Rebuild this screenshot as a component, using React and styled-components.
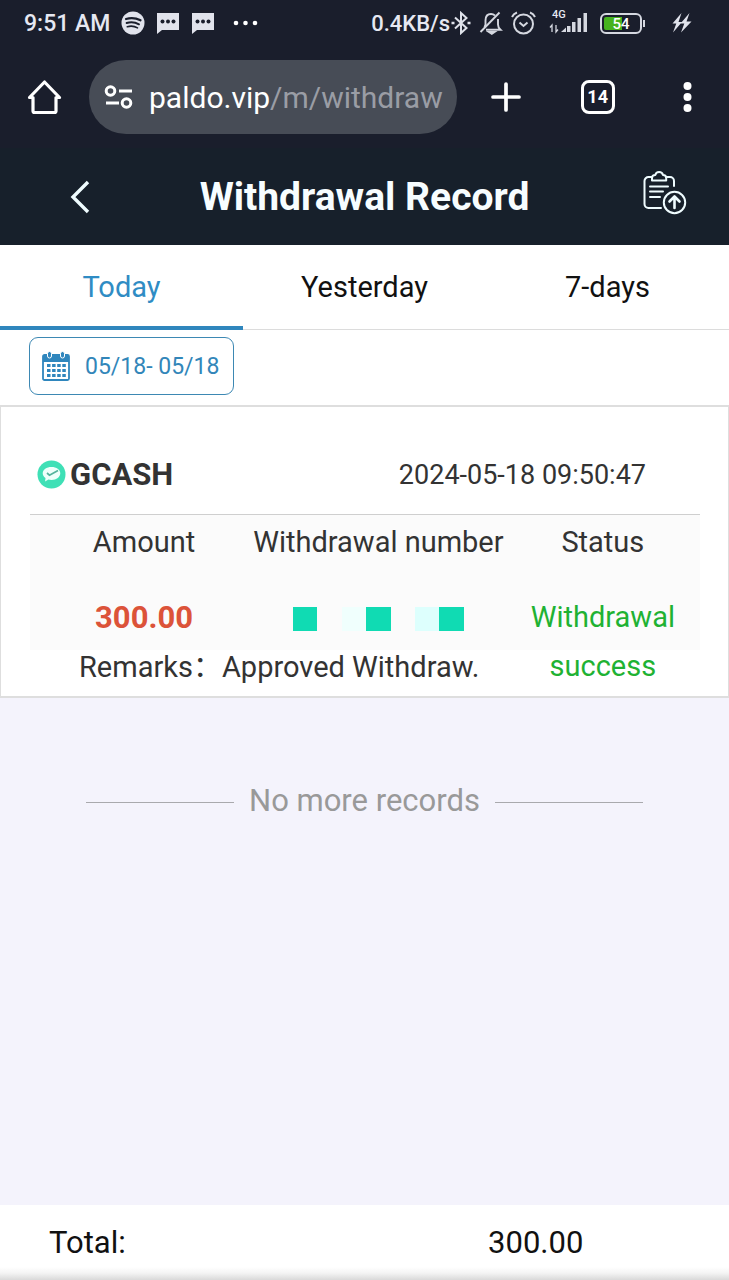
import styled, { createGlobalStyle } from 'styled-components';

const GlobalStyle = createGlobalStyle`
  * {
    box-sizing: border-box;
  }

  body {
    margin: 0;
    background: #f4f3fc;
    font-family: Roboto, 'Noto Sans CJK SC', sans-serif;
  }

  button {
    padding: 0;
    border: 0;
    background: none;
    color: inherit;
    font: inherit;
  }

  svg {
    display: block;
    flex: none;
  }
`;

const Page = styled.div`
  display: flex;
  flex-direction: column;
  min-height: 100vh;
`;

const StatusBar = styled.div`
  display: flex;
  justify-content: space-between;
  align-items: center;
  height: 46px;
  padding: 0 37px 0 24px;
  background: #1a1e2c;
  color: #e6e8f2;
  font-weight: 500;
`;

const StatusGroup = styled.div`
  display: flex;
  align-items: center;
  gap: ${({ $gap }) => $gap}px;
`;

const Clock = styled.span`
  font-size: 23px;
`;

const Speed = styled.span`
  font-size: 22px;
`;

const Network = styled.div`
  display: flex;
  flex-direction: column;
  margin-left: 4px;
  padding-bottom: 4px;
  font-size: 11px;
  line-height: 10px;
`;

const NetworkType = styled.span`
  padding-left: 3px;
`;

const Battery = styled.div`
  display: flex;
  align-items: center;
  margin: 0 19px 0 3px;

  &::after {
    content: '';
    width: 2px;
    height: 7px;
    margin-left: 1px;
    background: #d5d8e0;
  }
`;

const BatteryLevel = styled.span`
  width: 42px;
  height: 21px;
  padding: 2px;
  border: 2px solid #d5d8e0;
  border-radius: 6px;
  background: linear-gradient(90deg, #46b31e 54%, transparent 54%) content-box;
  color: #fff;
  font-size: 15px;
  line-height: 14px;
  text-align: center;
`;

const BrowserBar = styled.div`
  display: flex;
  align-items: center;
  height: 102px;
  padding: 0 32px 0 27px;
  background: #1a1e2c;
  color: #fff;
`;

const AddressBar = styled.button`
  display: flex;
  flex: 1;
  align-items: center;
  gap: 16px;
  height: 74px;
  margin: 0 34px 0 27px;
  padding: 0 14px 0 15px;
  border-radius: 37px;
  background: #474c56;
  color: #fff;
  font-size: 30px;
  white-space: nowrap;
`;

const UrlPath = styled.span`
  color: #9a9da5;
`;

const BrowserActions = styled.div`
  display: flex;
  align-items: center;
  gap: 60px;
`;

const TabCount = styled.button`
  width: 34px;
  height: 34px;
  border: 3px solid #fff;
  border-radius: 8px;
  font-size: 18px;
  font-weight: 700;
  line-height: 28px;
`;

const Header = styled.header`
  display: grid;
  grid-template-columns: 60px 1fr 68px;
  align-items: center;
  height: 97px;
  padding: 0 42px 0 50px;
  background: #17202b;
  color: #f7fdff;
`;

const HeaderButton = styled.button`
  display: flex;
  justify-content: ${({ $align }) => $align};
`;

const Title = styled.h1`
  margin: 0;
  font-size: 39px;
  font-weight: 700;
  text-align: center;
`;

const Tabs = styled.nav`
  display: flex;
  background: #fff;
`;

const Tab = styled.button`
  flex: 1;
  height: 85px;
  padding: ${({ $active }) => ($active ? '2px 0 0' : '0 0 1px')};
  border-bottom: ${({ $active }) => ($active ? '4px solid #2f86bd' : '1px solid #dcdcdc')};
  color: ${({ $active }) => ($active ? '#2f8cc4' : '#111')};
  font-size: 29px;
`;

const Filter = styled.div`
  padding: 7px 29px 10px;
  background: #fff;
`;

const DateButton = styled.button`
  display: flex;
  align-items: center;
  gap: 15px;
  height: 58px;
  padding: 0 14px 0 12px;
  border: 1px solid #3d88b3;
  border-radius: 9px;
  color: #3286b9;
  font-size: 23px;
`;

const Card = styled.article`
  padding: 0 28px 0 29px;
  border: 1px solid #dedede;
  border-width: 2px 1px;
  background: #fff;
  color: #333;
`;

const CardHead = styled.div`
  display: flex;
  justify-content: space-between;
  align-items: center;
  height: 108px;
  padding: 28px 54px 0 7px;
  border-bottom: 1px solid #cfcfcf;
  font-size: 27px;
`;

const Method = styled.h2`
  display: flex;
  align-items: center;
  gap: 4px;
  margin: 0;
  font-size: 31px;
  font-weight: 700;
`;

const RecordTable = styled.table`
  width: 100%;
  border-collapse: collapse;
  table-layout: fixed;
  background: linear-gradient(#fbfbfb 135px, #fff 135px);
  font-size: 29px;
  line-height: 49px;
  text-align: center;

  th,
  td {
    padding: 0;
    font-weight: 400;
    white-space: nowrap;
  }

  th:first-child,
  td:first-child {
    padding-left: 7px;
  }
`;

const HeadCell = styled.th`
  width: ${({ $width }) => $width};
  height: 78px;
  vertical-align: top;
  line-height: 54px;
`;

const Amount = styled.strong`
  color: #dc5339;
  font-size: 31px;
  font-weight: 700;
`;

const StatusCell = styled.td`
  height: 102px;
  color: #1fb233;
  vertical-align: top;

  && {
    white-space: normal;
  }
`;

const RemarkCell = styled.td`
  height: 53px;
  vertical-align: top;

  &&&& {
    padding-left: 49px;
    text-align: left;
  }
`;

const Mosaic = styled.div`
  display: grid;
  grid-template-columns: repeat(7, 1fr);
  width: 171px;
  height: 24px;
  margin: 2px auto 0;
`;

const Tile = styled.span`
  background: ${({ $color }) => $color};
`;

const EndOfList = styled.div`
  display: flex;
  flex: 1;
  align-items: flex-start;
  justify-content: center;
  gap: 15px;
  padding-top: 84px;
  color: #999;
  font-size: 31px;
  line-height: 38px;

  &::before,
  &::after {
    content: '';
    width: 148px;
    height: 1px;
    margin-top: 20px;
    background: #a9a9ad;
  }
`;

const Footer = styled.footer`
  display: grid;
  grid-template-columns: 1fr 1fr;
  align-items: center;
  height: 75px;
  background: linear-gradient(#fff 62px, #f4f4f4 68px, #d9d9d9 75px);
  color: #111;
  font-size: 31px;
`;

const TotalLabel = styled.span`
  padding-left: 49px;
`;

const TotalValue = styled.span`
  padding-right: 22px;
  text-align: center;
`;

const ChatIcon = () => (
  <svg width="24" height="22" viewBox="0 0 24 22">
    <path d="M1 1h22v17H6l-5 4z" fill="#e1e3ec" />
    <g fill="#1a1e2c">
      <circle cx="6.5" cy="9.500" r="2" />
      <circle cx="12" cy="9.500" r="2" />
      <circle cx="17.5" cy="9.500" r="2" />
    </g>
  </svg>
);

const SpotifyIcon = () => (
  <svg width="24" height="24" viewBox="0 0 24 24" fill="none">
    <circle cx="12" cy="12" r="11.5" fill="#e1e3ec" />
    <g stroke="#1a1e2c" strokeLinecap="round">
      <path d="M5 8c5-1.5 10-1 14.5 1.3" strokeWidth="2.2" />
      <path d="M5.6 12c4.4-1.3 8.6-.8 12.4 1.3" strokeWidth="1.9" />
      <path d="M6.3 15.7c3.700-1 7.200-.6 10.200 1.200" strokeWidth="1.6" />
    </g>
  </svg>
);

const BluetoothIcon = () => (
  <svg width="20" height="24" viewBox="0 0 20 24" fill="none" stroke="#dfe2ea" strokeWidth="2">
    <path d="M4 6.500 15.500 17 10 22V2l5.500 5L4 17.500" />
    <path d="M.5 12h3M16.500 12h3" strokeWidth="2.600" />
  </svg>
);

const MutedIcon = () => (
  <svg width="24" height="24" viewBox="0 0 24 24" fill="none" stroke="#d5d8e0" strokeWidth="1.9">
    <path d="M16 4.500C14.500 3.300 13.200 3 12 3 8 3 6.500 6 6.500 9.500v4l-1 2.500M7 18.800h14.500c-1.800-1.600-2.500-3.300-2.500-5.300V8" />
    <path d="M20.500 1.500 1.500 21" />
    <path d="M10 21h5.500l-2.700 1.800z" fill="#d5d8e0" />
  </svg>
);

const AlarmIcon = () => (
  <svg width="26" height="24" viewBox="0 0 26 24" fill="none" stroke="#d5d8e0" strokeWidth="2">
    <circle cx="12.5" cy="13" r="9.500" />
    <path d="m8.500 11.500 4 3.500 4-3.500M1 6c1-2.200 2.500-3.600 5-4.500M24 6c-1-2.200-2.500-3.600-5-4.500" />
  </svg>
);

const SignalIcon = () => (
  <svg width="40" height="12" viewBox="0 0 40 12" overflow="visible">
    <path d="M3 12V5L1 7.500M7 5v7l2-2.500" fill="none" stroke="#d5d8e0" strokeWidth="1.300" />
    <g fill="#d5d8e0">
      <path d="m12 12 5-4.500V12z" />
      <path d="M18 6h3.500v6H18zM23 2h3.500v10H23zM28.500-2H32v14h-3.500zM34.500-7H38v19h-3.500z" />
    </g>
  </svg>
);

const BoltIcon = () => (
  <svg width="20" height="20" viewBox="0 0 20 20" fill="#e1e3ec">
    <path d="M9.500 0 .5 10.500h3.800L1 19.500 10 9H6.500zM17.500 0 8.500 10.500h3.800L9 19.500 19.500 8.500h-5z" />
  </svg>
);

const HomeIcon = () => (
  <svg width="35" height="36" viewBox="0 0 35 36" fill="none" stroke="#fff" strokeWidth="3.2" strokeLinejoin="round" strokeLinecap="round">
    <path d="M2.500 18.500 17.500 3l15 15.500H29V32a1.500 1.500 0 0 1-1.500 1.500h-20A1.500 1.500 0 0 1 6 32V18.500z" />
  </svg>
);

const SiteInfoIcon = () => (
  <svg width="29" height="26" viewBox="0 0 29 26" fill="none" stroke="#fff" strokeWidth="3">
    <circle cx="6.5" cy="7" r="4.300" />
    <path d="M15 7h13M2 19h13" />
    <circle cx="22.5" cy="19" r="4.300" />
  </svg>
);

const PlusIcon = () => (
  <svg width="30" height="30" viewBox="0 0 30 30" fill="none" stroke="#fff" strokeWidth="3.7" strokeLinecap="round">
    <path d="M15 2v26M2 15h26" />
  </svg>
);

const MenuIcon = () => (
  <svg width="25" height="32" viewBox="0 0 25 32" fill="#fff">
    <circle cx="12.5" cy="5" r="4" />
    <circle cx="12.5" cy="16" r="4" />
    <circle cx="12.5" cy="27" r="4" />
  </svg>
);

const BackIcon = () => (
  <svg width="20" height="34" viewBox="0 0 20 34" fill="none" stroke="#effcff" strokeWidth="3.4">
    <path d="M18 2 3 17l15 15" />
  </svg>
);

const ReportIcon = () => (
  <svg width="44" height="52" viewBox="0 0 44 52" fill="none" stroke="#effcff" strokeWidth="2" strokeLinecap="round" strokeLinejoin="round">
    <path d="M9 6H5.500A4 4 0 0 0 1.500 10v23a4 4 0 0 0 4 4H18M23 6h4a4 4 0 0 1 4 4v5" />
    <path d="M9 9.500V7c0-2 1.500-3 3.300-3 .4-2 2-3 3.800-3S19.500 2 20 4c1.800 0 3.200 1 3.200 3v2.500z" />
    <path d="M7 15.500h18M7 20.500h13M7 26h10" />
    <circle cx="31.5" cy="31.500" r="10.700" />
    <path d="M31.500 37V26M26.500 30.500l5-5 5 5" strokeWidth="2.600" />
  </svg>
);

const CalendarIcon = () => (
  <svg width="28" height="30" viewBox="0 0 28 30">
    <rect x="1" y="4" width="26" height="25" rx="1.500" fill="#fff" stroke="#2f86bd" strokeWidth="1.8" />
    <path d="M1 4h26v7H1z" fill="#2f86bd" />
    <g fill="#2f86bd" stroke="#fff">
      <rect x="5.5" y=".5" width="4" height="6.500" rx="2" />
      <rect x="18.5" y=".5" width="4" height="6.500" rx="2" />
    </g>
    <path d="M5 14.500h19M5 19.500h19M5 24.500h19" stroke="#2f86bd" strokeWidth="3.2" strokeDasharray="3.5 1.600" />
  </svg>
);

const PaymentIcon = () => (
  <svg width="29" height="29" viewBox="0 0 29 29">
    <circle cx="14.5" cy="14.500" r="14" fill="#3fe0b6" />
    <path d="M14.500 7c5 0 8.800 2.700 8.800 6.300s-3.800 6.700-8.800 6.700c-1.100 0-2.200-.2-3.100-.4l-3.300 2 .4-3.600c-1.900-1.200-2.800-2.800-2.800-4.700C5.700 9.700 9.500 7 14.500 7z" fill="#effffb" />
    <path d="m10 13 2.500 2.200L21 10.500" fill="none" stroke="#55b39c" strokeWidth="1.700" />
  </svg>
);

const tabs = ['Today', 'Yesterday', '7-days'];

const tiles = ['#10dbb3', 'transparent', '#f0fffd', '#10dbb3', 'transparent', '#ddfffd', '#10dbb3'];

export default function App() {
  return (
    <Page>
      <GlobalStyle />
      <StatusBar>
        <StatusGroup $gap={11}>
          <Clock>9:51 AM</Clock>
          <SpotifyIcon />
          <ChatIcon />
          <ChatIcon />
          <svg width="42" height="6" viewBox="0 0 42 6" fill="#fff">
            <circle cx="10" cy="3" r="2.300" />
            <circle cx="19.5" cy="3" r="2.300" />
            <circle cx="29" cy="3" r="2.300" />
          </svg>
        </StatusGroup>
        <StatusGroup $gap={8}>
          <StatusGroup $gap={1}>
            <Speed>0.4KB/s</Speed>
            <BluetoothIcon />
          </StatusGroup>
          <MutedIcon />
          <AlarmIcon />
          <Network>
            <NetworkType>4G</NetworkType>
            <SignalIcon />
          </Network>
          <Battery>
            <BatteryLevel>54</BatteryLevel>
          </Battery>
          <BoltIcon />
        </StatusGroup>
      </StatusBar>

      <BrowserBar>
        <button aria-label="Home">
          <HomeIcon />
        </button>
        <AddressBar>
          <SiteInfoIcon />
          <span>
            paldo.vip<UrlPath>/m/withdraw</UrlPath>
          </span>
        </AddressBar>
        <BrowserActions>
          <button aria-label="New tab">
            <PlusIcon />
          </button>
          <TabCount>14</TabCount>
          <button aria-label="Menu">
            <MenuIcon />
          </button>
        </BrowserActions>
      </BrowserBar>

      <Header>
        <HeaderButton $align="center" aria-label="Back">
          <BackIcon />
        </HeaderButton>
        <Title>Withdrawal Record</Title>
        <HeaderButton $align="flex-end" aria-label="Report">
          <ReportIcon />
        </HeaderButton>
      </Header>

      <Tabs>
        {tabs.map((tab, i) => (
          <Tab key={tab} $active={i === 0}>
            {tab}
          </Tab>
        ))}
      </Tabs>

      <Filter>
        <DateButton>
          <CalendarIcon />
          05/18- 05/18
        </DateButton>
      </Filter>

      <Card>
        <CardHead>
          <Method>
            <PaymentIcon />
            GCASH
          </Method>
          <time>2024-05-18 09:50:47</time>
        </CardHead>
        <RecordTable>
          <thead>
            <tr>
              <HeadCell $width="33%">Amount</HeadCell>
              <HeadCell $width="38%">Withdrawal number</HeadCell>
              <HeadCell $width="29%">Status</HeadCell>
            </tr>
          </thead>
          <tbody>
            <tr>
              <td>
                <Amount>300.00</Amount>
              </td>
              <td>
                <Mosaic>
                  {tiles.map((color, i) => (
                    <Tile key={i} $color={color} />
                  ))}
                </Mosaic>
              </td>
              <StatusCell rowSpan={2}>Withdrawal success</StatusCell>
            </tr>
            <tr>
              <RemarkCell colSpan={2}>Remarks：Approved Withdraw.</RemarkCell>
            </tr>
          </tbody>
        </RecordTable>
      </Card>

      <EndOfList>No more records</EndOfList>

      <Footer>
        <TotalLabel>Total:</TotalLabel>
        <TotalValue>300.00</TotalValue>
      </Footer>
    </Page>
  );
}
